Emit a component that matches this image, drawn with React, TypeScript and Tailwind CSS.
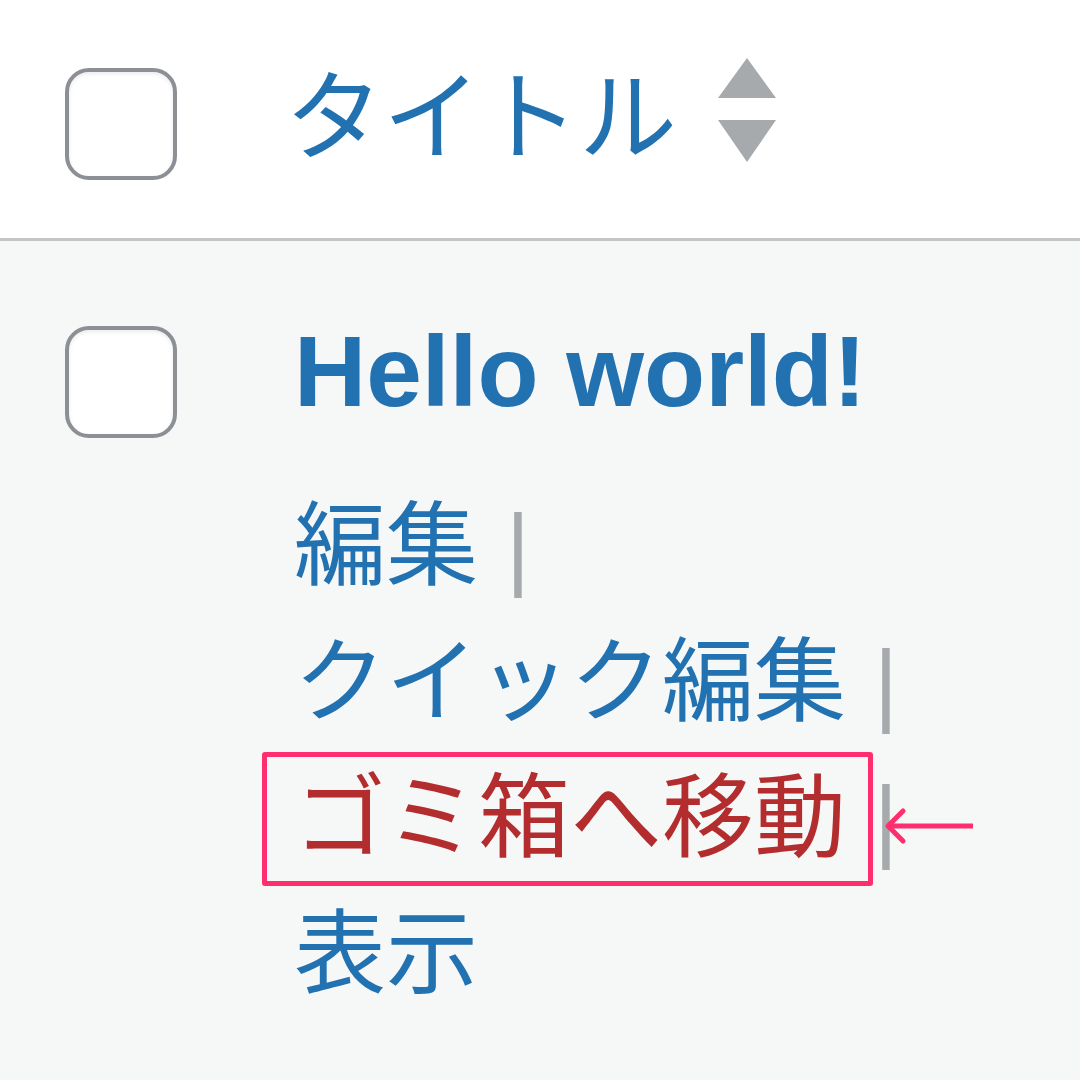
const JP = '"Noto Sans CJK JP", "Liberation Sans", sans-serif';

function Checkbox() {
  return (
    <div className="w-[112px] h-[112px] shrink-0 rounded-[24px] border-[4px] border-[#8c8f94] bg-white shadow-[inset_0_2px_4px_rgba(0,0,0,0.08)]" />
  );
}

function SortArrows() {
  return (
    <svg width="60" height="106" viewBox="0 0 60 106" className="shrink-0">
      <polygon points="30,0 59,40 1,40" fill="#a7aaad" />
      <polygon points="1,62 59,62 30,104" fill="#a7aaad" />
    </svg>
  );
}

function Sep() {
  return (
    <span
      className="text-[#a7aaad] ml-[28px] relative top-[9px]"
      style={{ fontFamily: '"Liberation Sans", sans-serif' }}
    >
      |
    </span>
  );
}

function Action({ label, trash, last }: { label: string; trash?: boolean; last?: boolean }) {
  return (
    <div className="h-[136px] flex items-center whitespace-nowrap">
      <span className={trash ? 'relative text-[#b32d2e]' : 'text-[#2271b1]'}>
        {label}
        {trash && (
          <span className="absolute left-[-32px] right-[-27px] top-[-8px] bottom-[-26px] border-[5px] border-[#ff2e6e] rounded-[3px] pointer-events-none" />
        )}
      </span>
      {!last && <Sep />}
      {trash && (
        <svg width="92" height="40" viewBox="0 0 92 40" className="ml-[-14px] relative top-[16px]">
          <line x1="4" y1="20" x2="89" y2="20" stroke="#ff2e6e" strokeWidth="5" />
          <polyline points="19,5 4,20 19,35" fill="none" stroke="#ff2e6e" strokeWidth="5" strokeLinejoin="round" strokeLinecap="round" />
        </svg>
      )}
    </div>
  );
}

export default function App() {
  return (
    <div className="w-[1080px] h-[1080px] flex flex-col overflow-hidden bg-[#f6f7f7]" style={{ fontFamily: JP }}>
      <div className="h-[241px] shrink-0 bg-white border-b-[3px] border-[#c3c4c7] flex items-start pl-[65px] pt-[68px]">
        <Checkbox />
        <div className="flex items-center ml-[108px] mt-[-24px]">
          <span className="text-[98px] leading-[130px] text-[#2271b1]">タイトル</span>
          <span className="ml-[40px] mt-[4px]">
            <SortArrows />
          </span>
        </div>
      </div>
      <div className="flex items-start pl-[65px] pt-[85px]">
        <Checkbox />
        <div className="ml-[117px] flex flex-col">
          <div
            className="text-[100px] leading-[110px] font-bold text-[#2271b1] mt-[-10px] mb-[60px]"
            style={{ fontFamily: '"Liberation Sans", Arial, sans-serif' }}
          >
            Hello world!
          </div>
          <div className="text-[92px] leading-[100px] flex flex-col mt-[-16px]">
            <Action label="編集" />
            <Action label="クイック編集" />
            <Action label="ゴミ箱へ移動" trash />
            <Action label="表示" last />
          </div>
        </div>
      </div>
    </div>
  );
}
